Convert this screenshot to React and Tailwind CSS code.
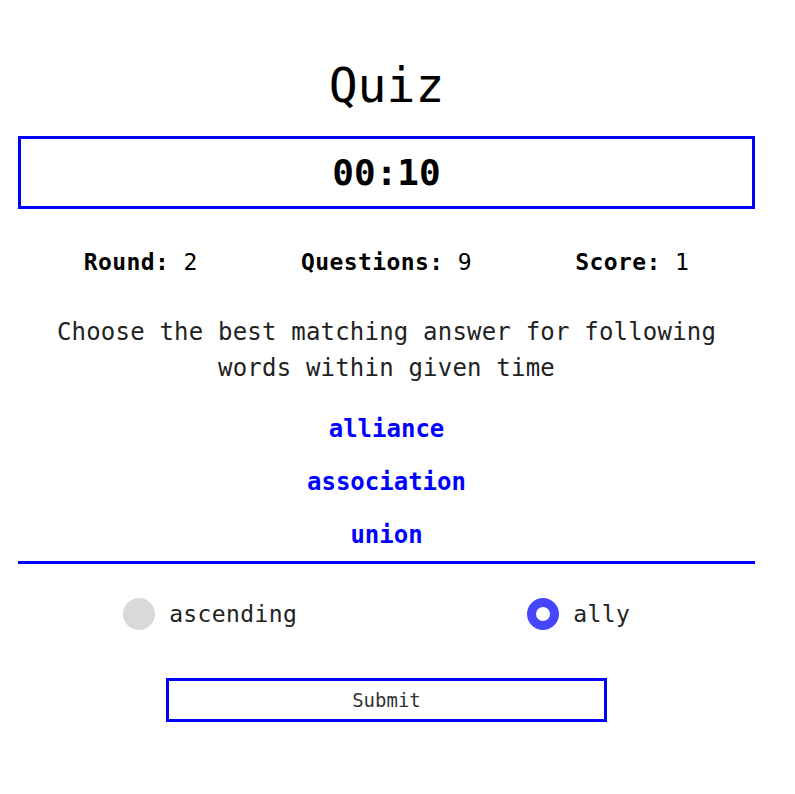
export default function App() {
	const options = [
		{ label: 'ascending', checked: false },
		{ label: 'ally', checked: true },
	];

	return (
		<div className="min-h-screen bg-white text-black font-['DejaVu_Sans_Mono',monospace]">
			<div className="ml-[18px] w-[737px] pt-[61px] pb-10">
				<h1 className="text-center text-5xl leading-[48px]">Quiz</h1>

				<div className="mt-[27px] h-[73px] border-[3px] border-[#0000ff] flex items-center justify-center">
					<span className="text-4xl font-bold">00:10</span>
				</div>

				<div className="mt-[37px] grid grid-cols-3 text-[23px] tracking-[0.4px] leading-8 text-center">
					<div><span className="font-bold">Round:</span> 2</div>
					<div><span className="font-bold">Questions:</span> 9</div>
					<div><span className="font-bold">Score:</span> 1</div>
				</div>

				<p className="mt-9 px-8 text-center text-[24px] leading-9 text-[#222] tracking-[0.2px]">
					Choose the best matching answer for following words within given time
				</p>

				<div className="mt-[25px] flex flex-col gap-[17px] text-center text-[24px] leading-9 font-semibold text-[#0000ff]">
					<span>alliance</span>
					<span>association</span>
					<span>union</span>
				</div>

				<div className="mt-2 border-t-[3px] border-[#0000ff]" />

				<div className="mt-[34px] grid grid-cols-2">
					{options.map((o) => (
						<label key={o.label} className="flex items-center justify-center gap-[14px] pl-4 cursor-pointer">
							{o.checked ? (
								<span className="w-8 h-8 rounded-full border-[9px] border-[#4646ff] bg-white" />
							) : (
								<span className="w-8 h-8 rounded-full bg-[#d9d9d9]" />
							)}
							<span className="text-[23px] tracking-[0.4px] leading-8 text-[#222]">{o.label}</span>
						</label>
					))}
				</div>

				<button className="mt-12 mx-auto block w-[441px] h-[44px] border-[3px] border-[#0000ff] text-[19px] text-[#333]">
					Submit
				</button>
			</div>
		</div>
	);
}
